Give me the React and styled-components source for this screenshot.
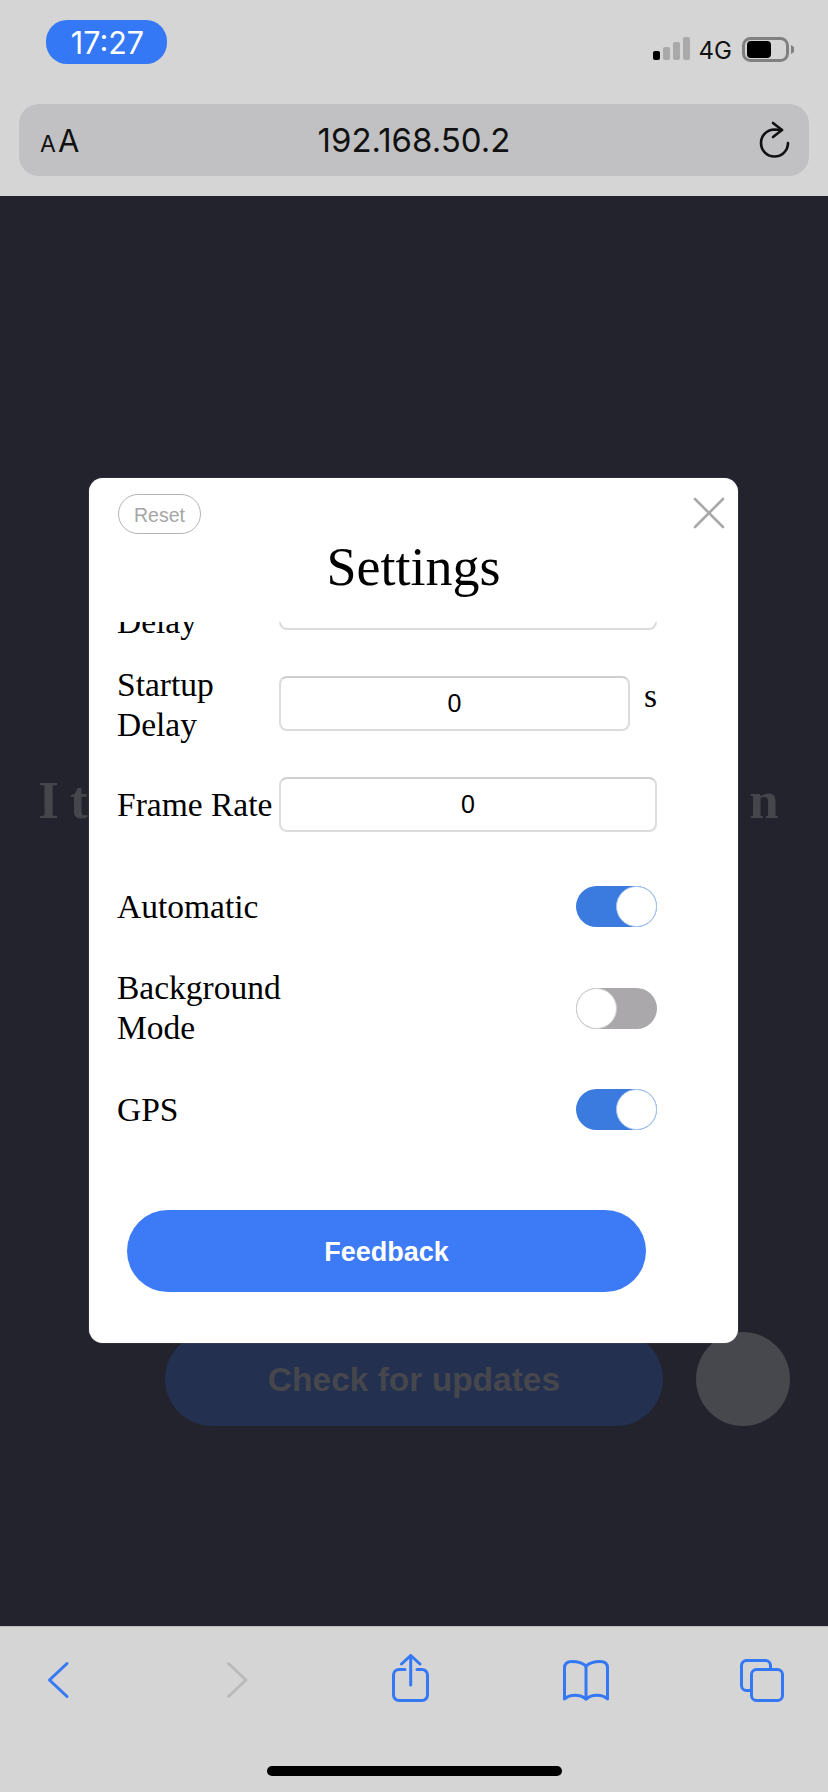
import React from 'react';
import styled, { createGlobalStyle } from 'styled-components';

const GlobalStyle = createGlobalStyle`
  html, body {
    margin: 0;
    padding: 0;
    background: #22232c;
  }
`;

const Page = styled.div`
  position: relative;
  display: flex;
  flex-direction: column;
  width: 828px;
  height: 1792px;
  overflow: hidden;
  font-family: "Liberation Sans", Arial, sans-serif;
`;

const TopBar = styled.header`
  box-sizing: border-box;
  height: 196px;
  padding-top: 20px;
  background: #d5d5d5;
`;

const StatusRow = styled.div`
  display: flex;
  justify-content: space-between;
  height: 44px;
  padding: 0 32px 0 46px;
`;

const TimePill = styled.div`
  box-sizing: border-box;
  width: 121px;
  height: 44px;
  padding-left: 2px;
  border-radius: 21px;
  background: #3478f6;
  color: #fff;
  font: 400 30.5px/45px Inter, "Liberation Sans", sans-serif;
  text-align: center;
`;

const StatusRight = styled.div`
  display: flex;
  align-items: flex-start;
  margin-top: 17px;
`;

const Network = styled.span`
  margin: 0 10px 0 8px;
  color: #111;
  font: 400 24px/28px Inter, "Liberation Sans", sans-serif;
`;

const AddressBar = styled.div`
  display: grid;
  grid-template-columns: 1fr auto 1fr;
  align-items: center;
  box-sizing: border-box;
  height: 72px;
  margin: 40px 19px 0;
  padding: 0 16px;
  border-radius: 20px;
  background: #c1c1c3;
`;

const TextSize = styled.span`
  display: flex;
  align-items: baseline;
  margin-left: 5px;
  color: #111;
  font-family: Inter, "Liberation Sans", sans-serif;
  font-size: 31px;
`;

const SmallA = styled.span`
  margin-right: 2px;
  font-size: 23px;
`;

const Url = styled.span`
  color: #111;
  font: 400 33px/40px Inter, "Liberation Sans", sans-serif;
`;

const ReloadSlot = styled.span`
  display: flex;
  justify-content: flex-end;
`;

const Content = styled.main`
  flex: 1;
  padding-top: 574px;
  background: #22232c;
`;

const Headline = styled.h2`
  margin: 0;
  color: #45464c;
  font: 700 53px/60px "Liberation Serif", "Times New Roman", serif;
  letter-spacing: 11.2px;
  text-align: center;
  white-space: nowrap;
`;

const UpdateRow = styled.div`
  display: flex;
  gap: 33px;
  margin: 502px 0 0 165px;
`;

const UpdateButton = styled.div`
  width: 498px;
  height: 94px;
  border-radius: 47px;
  background: #243050;
  color: #46474c;
  font-size: 33.5px;
  font-weight: 700;
  line-height: 96px;
  text-align: center;
`;

const RoundButton = styled.div`
  width: 94px;
  height: 94px;
  border-radius: 50%;
  background: #47484d;
`;

const BottomBar = styled.footer`
  box-sizing: border-box;
  height: 166px;
  padding-top: 27px;
  border-top: 1px solid #bdbdbf;
  background: #d5d5d5;
`;

const IconRow = styled.nav`
  display: flex;
  gap: 128px;
  padding-left: 34px;
`;

const HomeIndicator = styled.div`
  width: 295px;
  height: 10px;
  margin: 62px 0 0 267px;
  border-radius: 5px;
  background: #000;
`;

const Modal = styled.section`
  position: absolute;
  top: 478px;
  left: 89px;
  display: flex;
  flex-direction: column;
  box-sizing: border-box;
  width: 649px;
  height: 865px;
  padding-top: 16px;
  border-radius: 14px;
  background: #fff;
  box-shadow: 0 0 1px rgba(255, 255, 255, 0.6);
`;

const ResetButton = styled.div`
  box-sizing: border-box;
  width: 83px;
  height: 40px;
  margin-left: 29px;
  border: 1.5px solid #b4b4b4;
  border-radius: 20px;
  color: #a6a6a6;
  font-size: 19.5px;
  line-height: 40px;
  text-align: center;
`;

const CloseIcon = styled.svg`
  position: absolute;
  top: 19px;
  right: 13px;
`;

const Title = styled.h1`
  margin: 3px 0 25px;
  color: #000;
  font: 400 54px/60px "Liberation Serif", "Times New Roman", serif;
  text-align: center;
`;

const ScrollArea = styled.div`
  flex: 1;
  min-height: 0;
  overflow: hidden;
  padding-left: 28px;
`;

const Row = styled.div`
  display: flex;
  align-items: center;
  width: 540px;
  height: ${(p) => p.$height}px;
  margin-top: ${(p) => p.$gap}px;
`;

const Label = styled.div`
  flex: none;
  width: 162px;
  color: #000;
  font: 400 33.5px/40px "Liberation Serif", "Times New Roman", serif;
`;

const ClippedLabel = styled(Label)`
  align-self: flex-start;
  margin: 27px 0 -12px;
`;

const Field = styled.div`
  box-sizing: border-box;
  flex: 1;
  height: 55px;
  margin-bottom: ${(p) => p.$lift || 0}px;
  border: 2px solid #dcdcdc;
  border-top-color: #cfcfcf;
  border-radius: 8px;
  background: #fff;
  color: #000;
  font-size: 25px;
  line-height: 51px;
  text-align: center;
`;

const Unit = styled.span`
  align-self: flex-start;
  width: 27px;
  margin-top: 11px;
  color: #000;
  font: 400 33.5px/40px "Liberation Serif", "Times New Roman", serif;
  text-align: right;
`;

const Toggle = styled.div`
  display: flex;
  justify-content: ${(p) => (p.$on ? 'flex-end' : 'flex-start')};
  width: 81px;
  height: 41px;
  margin-left: auto;
  border-radius: 21px;
  background: ${(p) => (p.$on ? '#3b7ade' : '#aaa8ab')};
`;

const Knob = styled.div`
  box-sizing: border-box;
  width: 41px;
  height: 41px;
  border: 1px solid ${(p) => (p.$on ? '#a9c6ee' : '#cfcfcf')};
  border-radius: 50%;
  background: #fff;
`;

const FeedbackButton = styled.div`
  width: 519px;
  height: 82px;
  margin: 0 0 51px 38px;
  border-radius: 41px;
  background: #3d7af5;
  color: #fff;
  font-size: 27px;
  font-weight: 700;
  line-height: 84px;
  text-align: center;
`;

const SignalIcon = () => (
  <svg width="38" height="24" viewBox="0 0 38 24">
    <rect x="0" y="14" width="7" height="9" rx="2" fill="#000" />
    <rect x="10" y="10" width="7" height="13" rx="2" fill="#a9a9a9" />
    <rect x="20" y="5" width="7" height="18" rx="2" fill="#a9a9a9" />
    <rect x="30" y="0" width="7" height="23" rx="2" fill="#a9a9a9" />
  </svg>
);

const BatteryIcon = () => (
  <svg width="54" height="26" viewBox="0 0 54 26">
    <rect x="1.5" y="1.5" width="44" height="22" rx="7" fill="none" stroke="#808080" strokeWidth="3" />
    <rect x="5" y="4" width="24" height="17" rx="4" fill="#000" />
    <path d="M49 8 L52 10 V15 L49 17 Z" fill="#808080" />
  </svg>
);

const ReloadIcon = () => (
  <svg width="34" height="40" viewBox="0 0 34 40" fill="none" stroke="#111" strokeWidth="2.6" strokeLinecap="round" strokeLinejoin="round">
    <path d="M29 23 A13.5 13.5 0 1 1 15.5 9.5 L23 10" />
    <path d="M14 3 L23 10 L14 17" />
  </svg>
);

const BackIcon = () => (
  <svg width="48" height="50" viewBox="0 0 48 50" fill="none" stroke="#3478f6" strokeWidth="3" strokeLinecap="round" strokeLinejoin="round">
    <path d="M33 9.5 L15.5 26 L33 42.5" />
  </svg>
);

const ForwardIcon = () => (
  <svg width="48" height="50" viewBox="0 0 48 50" fill="none" stroke="#bababa" strokeWidth="3" strokeLinecap="round" strokeLinejoin="round">
    <path d="M18.5 9.5 L36 26 L18.5 42.5" />
  </svg>
);

const ShareIcon = () => (
  <svg width="48" height="50" viewBox="0 0 48 50" fill="none" stroke="#3478f6" strokeWidth="3" strokeLinecap="round" strokeLinejoin="round">
    <path d="M19 15.5 H13 A5.5 5.5 0 0 0 7.5 21 V41 A5.5 5.5 0 0 0 13 46.5 H36 A5.5 5.5 0 0 0 41.5 41 V21 A5.5 5.5 0 0 0 36 15.5 H31" />
    <path d="M24.7 31 V2" />
    <path d="M15.5 10 L24.7 1.5 L34 10" />
  </svg>
);

const BookIcon = () => (
  <svg width="48" height="50" viewBox="0 0 48 50" fill="none" stroke="#3478f6" strokeWidth="3" strokeLinecap="round" strokeLinejoin="round">
    <path d="M24 12 C20 8.5 14 7.5 10 7.5 C5 7.5 2.5 10 2.5 14 V45 C8 40 18 40 24 45 C30 40 40 40 45.5 45 V14 C45.5 10 43 7.5 38 7.5 C34 7.5 28 8.5 24 12 Z" />
    <path d="M24 12 V45" />
  </svg>
);

const TabsIcon = () => (
  <svg width="48" height="50" viewBox="0 0 48 50" fill="none" stroke="#3478f6" strokeWidth="3" strokeLinecap="round" strokeLinejoin="round">
    <path d="M13.5 36.5 H8.5 A5 5 0 0 1 3.5 31.5 V11.5 A5 5 0 0 1 8.5 6.5 H27.5 A5 5 0 0 1 32.5 11.5 V15.5" />
    <rect x="13.5" y="15.5" width="31" height="31" rx="5" />
  </svg>
);

const Switch = ({ on }) => (
  <Toggle $on={on}>
    <Knob $on={on} />
  </Toggle>
);

const App = () => (
  <Page>
    <GlobalStyle />
    <TopBar>
      <StatusRow>
        <TimePill>17:27</TimePill>
        <StatusRight>
          <SignalIcon />
          <Network>4G</Network>
          <BatteryIcon />
        </StatusRight>
      </StatusRow>
      <AddressBar>
        <TextSize><SmallA>A</SmallA>A</TextSize>
        <Url>192.168.50.2</Url>
        <ReloadSlot><ReloadIcon /></ReloadSlot>
      </AddressBar>
    </TopBar>

    <Content>
      <Headline>It is the latest version</Headline>
      <UpdateRow>
        <UpdateButton>Check for updates</UpdateButton>
        <RoundButton />
      </UpdateRow>
    </Content>

    <BottomBar>
      <IconRow>
        <BackIcon />
        <ForwardIcon />
        <ShareIcon />
        <BookIcon />
        <TabsIcon />
      </IconRow>
      <HomeIndicator />
    </BottomBar>

    <Modal>
      <ResetButton>Reset</ResetButton>
      <CloseIcon width="32" height="32" viewBox="0 0 32 32" fill="none" stroke="#a8a8a8" strokeWidth="2.6" strokeLinecap="round">
        <path d="M2 2 L30 30 M30 2 L2 30" />
      </CloseIcon>
      <Title>Settings</Title>
      <ScrollArea>
        <Row $height={55} $gap={-47}>
          <ClippedLabel>Delay</ClippedLabel>
          <Field />
        </Row>
        <Row $height={80} $gap={35}>
          <Label>Startup Delay</Label>
          <Field $lift={3}>0</Field>
          <Unit>s</Unit>
        </Row>
        <Row $height={55} $gap={32}>
          <Label>Frame Rate</Label>
          <Field>0</Field>
        </Row>
        <Row $height={41} $gap={54}>
          <Label>Automatic</Label>
          <Switch on />
        </Row>
        <Row $height={80} $gap={41}>
          <Label>Background Mode</Label>
          <Switch />
        </Row>
        <Row $height={41} $gap={41}>
          <Label>GPS</Label>
          <Switch on />
        </Row>
      </ScrollArea>
      <FeedbackButton>Feedback</FeedbackButton>
    </Modal>
  </Page>
);

export default App;
